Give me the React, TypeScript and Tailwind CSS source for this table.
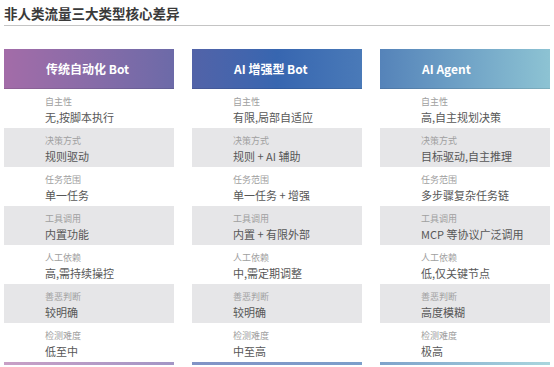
import React from 'react';

type Row = { label: string; value: string };

interface Column {
  title: string;
  head: string;
  bar: string;
  rows: Row[];
}

const labels = ['自主性', '决策方式', '任务范围', '工具调用', '人工依赖', '善恶判断', '检测难度'];

const make = (values: string[]): Row[] => values.map((value, i) => ({ label: labels[i], value }));

const columns: Column[] = [
  {
    title: '传统自动化 Bot',
    head: 'bg-gradient-to-r from-[#a36ca8] to-[#6c6aa8]',
    bar: 'bg-gradient-to-r from-[#c9a0c6] to-[#a396c6]',
    rows: make(['无,按脚本执行', '规则驱动', '单一任务', '内置功能', '高,需持续操控', '较明确', '低至中']),
  },
  {
    title: 'AI 增强型 Bot',
    head: 'bg-gradient-to-r from-[#5263a8] via-[#3766b0] to-[#4a7ab8]',
    bar: 'bg-gradient-to-r from-[#8293c6] to-[#7c9fcb]',
    rows: make(['有限,局部自适应', '规则 + AI 辅助', '单一任务 + 增强', '内置 + 有限外部', '中,需定期调整', '较明确', '中至高']),
  },
  {
    title: 'AI Agent',
    head: 'bg-gradient-to-r from-[#5583b9] to-[#8dc3d3]',
    bar: 'bg-gradient-to-r from-[#7fa3cb] to-[#a9d6de]',
    rows: make(['高,自主规划决策', '目标驱动,自主推理', '多步骤复杂任务链', 'MCP 等协议广泛调用', '低,仅关键节点', '高度模糊', '极高']),
  },
];

function ColumnCard({ col }: { col: Column }) {
  return (
    <div className="flex flex-col">
      <div className={`h-[40px] flex items-center pl-[42px] border-b border-black/10 ${col.head}`}>
        <span className="text-white text-[12px] font-bold leading-none">{col.title}</span>
      </div>
      {col.rows.map((r, i) => (
        <div
          key={r.label}
          className={`h-[39px] pl-[41px] pt-[7px] ${i % 2 === 1 ? 'bg-[#e6e6e8]' : 'bg-white'}`}
        >
          <div className="text-[9px] leading-[12px] text-[#a0a0a0]">{r.label}</div>
          <div className="text-[11px] leading-[16px] mt-[1px] text-[#575757]">{r.value}</div>
        </div>
      ))}
      <div className={`h-[3px] ${col.bar}`} />
    </div>
  );
}

export default function App() {
  return (
    <div
      className="w-[554px] h-[367px] bg-white px-[4px] overflow-hidden"
      style={{ fontFamily: '"Noto Sans CJK SC", "Noto Sans", sans-serif' }}
    >
      <h1 className="pt-[3px] h-[25px] text-[13.5px] leading-[20px] font-bold text-[#3a3a3a]">
        非人类流量三大类型核心差异
      </h1>
      <div className="h-px bg-[#c4c4c4]" />
      <div className="grid grid-cols-3 gap-[18px] mt-[23px]">
        {columns.map((c) => (
          <ColumnCard key={c.title} col={c} />
        ))}
      </div>
    </div>
  );
}
